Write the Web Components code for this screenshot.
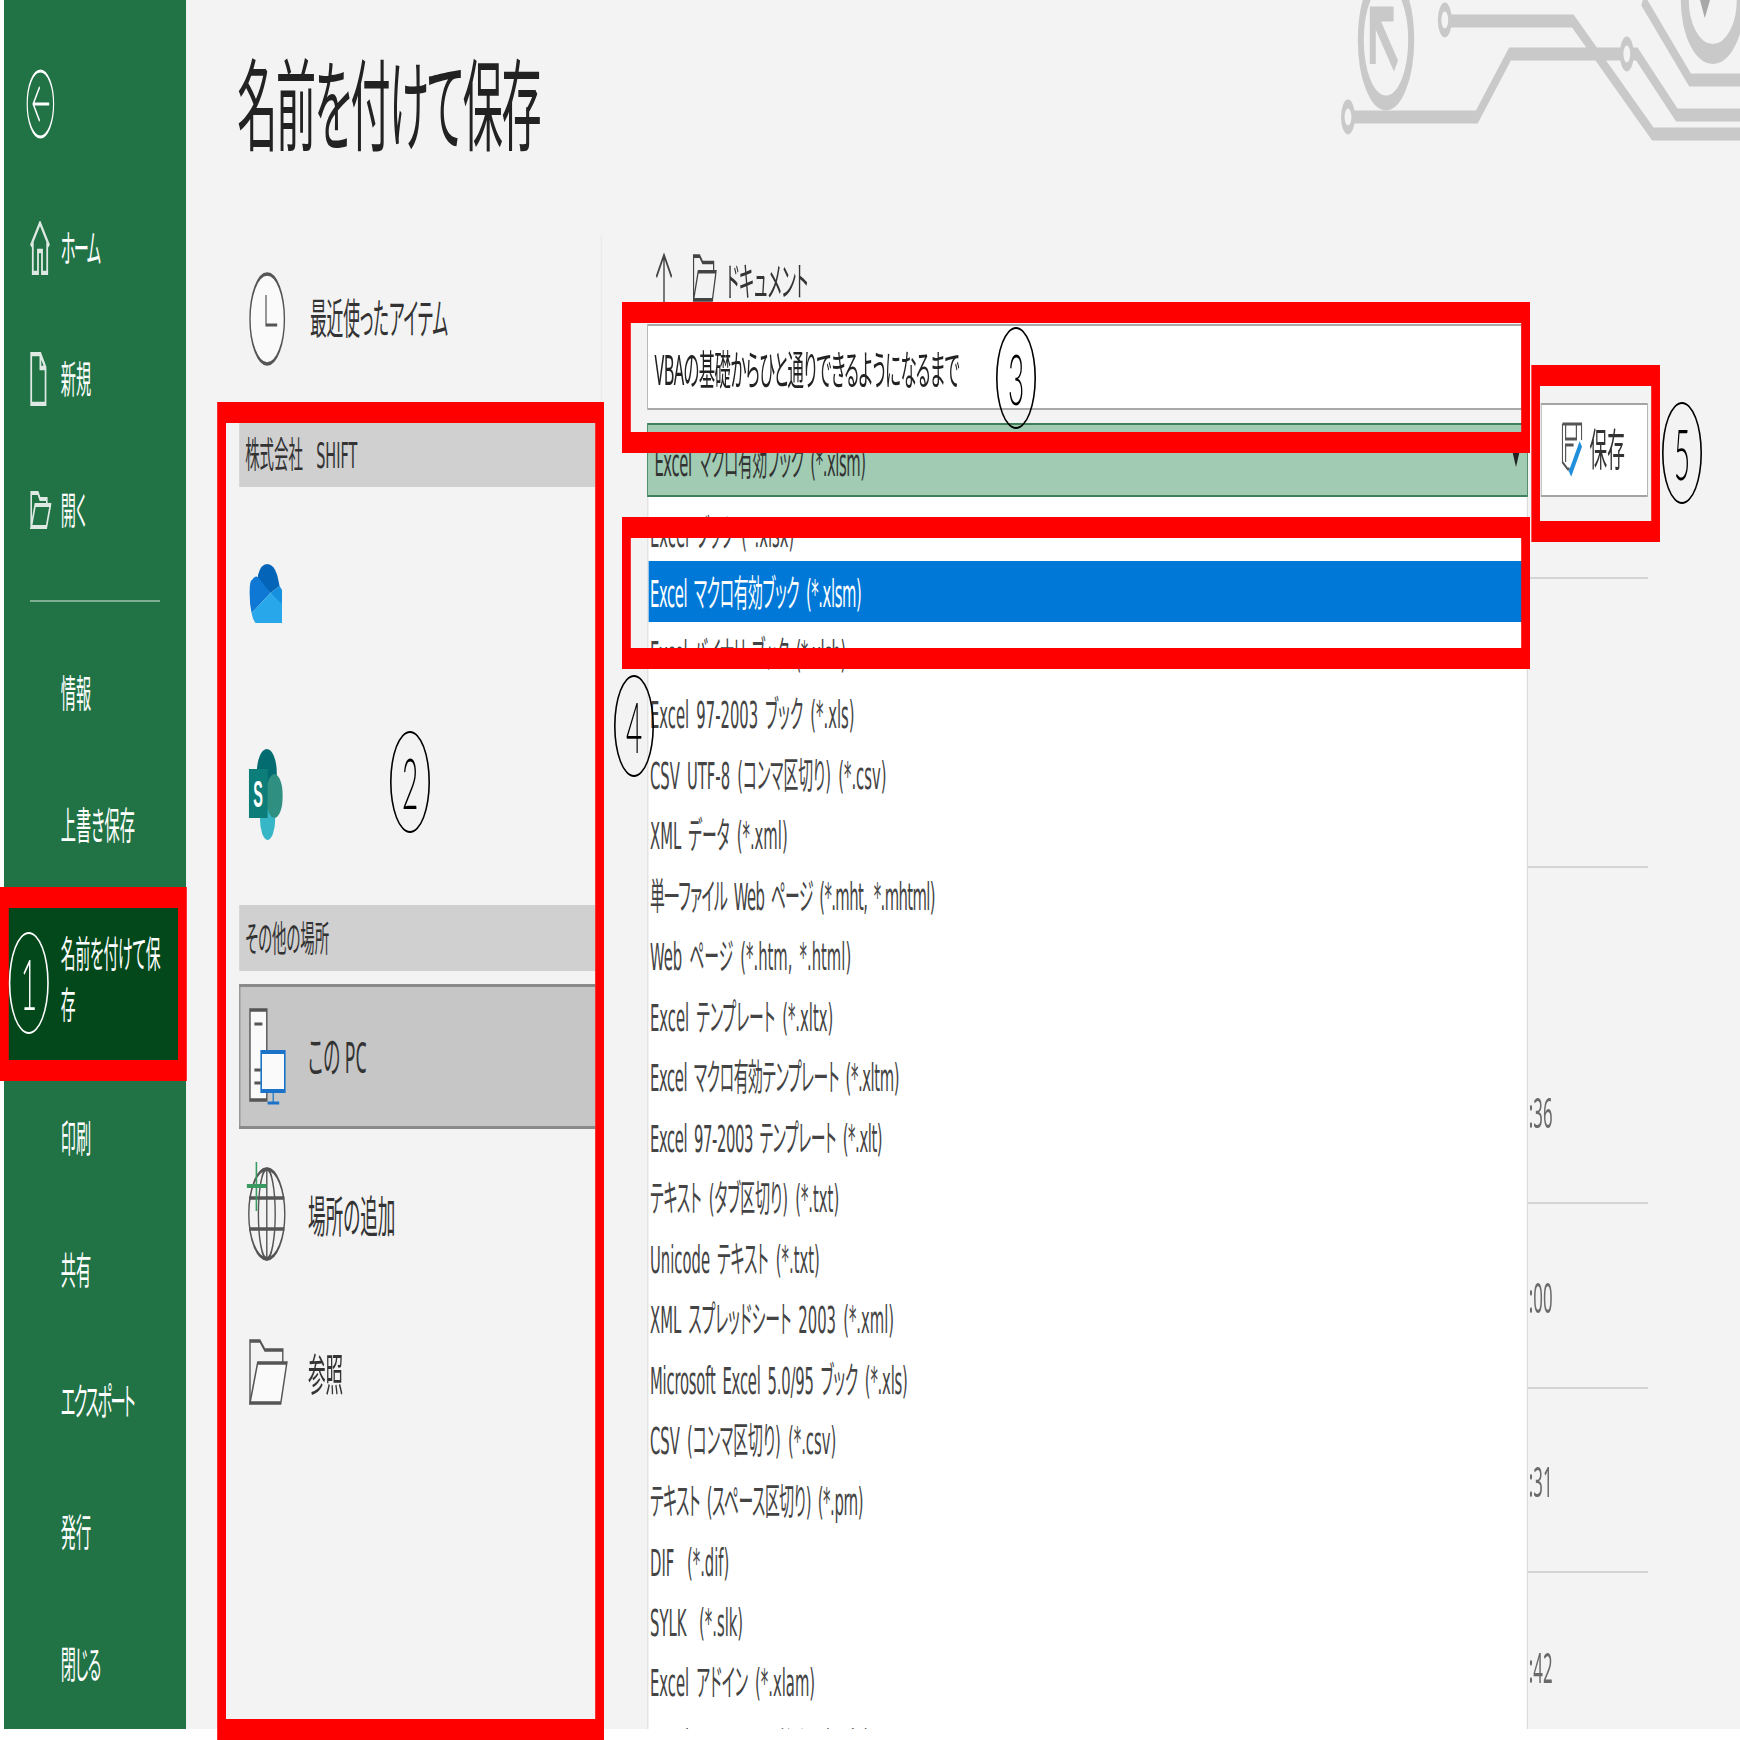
<!DOCTYPE html>
<html lang="ja">
<head>
<meta charset="UTF-8">
<title>名前を付けて保存</title>
<style>
html, body { margin: 0; background: #fff; overflow: hidden; }
</style>
</head>
<body>
<save-as-screen>
  <side-nav slot="nav">
    <nav-back></nav-back>
    <nav-item style="letter-spacing:-4px"><svg slot="icon" width="50" height="54" viewBox="0 0 50 54" fill="none" stroke="#dfe9e3" stroke-width="4.5"><path d="M2 25 25 2 48 25M7 21V52H20V30H30V52H43V21"/></svg>ホーム</nav-item>
    <nav-item><svg slot="icon" width="42" height="54" viewBox="0 0 42 54" fill="none" stroke="#dfe9e3" stroke-width="4.5"><path d="M3 2H26L39 16V52H3ZM26 2V16H39"/></svg>新規</nav-item>
    <nav-item><svg slot="icon" width="54" height="40" viewBox="0 0 54 40" fill="none" stroke="#dfe9e3" stroke-width="4"><path d="M3 37V3H20L25 9H42V15M3 37H41L51 15H13Z"/></svg>開く</nav-item>
    <nav-sep></nav-sep>
    <nav-item>情報</nav-item>
    <nav-item>上書き保存</nav-item>
    <nav-item selected>名前を付けて保存</nav-item>
    <nav-item>印刷</nav-item>
    <nav-item>共有</nav-item>
    <nav-item style="letter-spacing:-4px">エクスポート</nav-item>
    <nav-item>発行</nav-item>
    <nav-item style="letter-spacing:-2px">閉じる</nav-item>
  </side-nav>

  <save-title slot="title">名前を付けて保存</save-title>
  <circuit-art slot="art"></circuit-art>

  <place-list slot="places">
    <place-row h="120" mt="24" tx="5">
      <svg slot="icon" width="92" height="94" viewBox="0 0 92 94"><ellipse cx="46" cy="47" rx="43" ry="45" fill="#fafafa" stroke="#555" stroke-width="3.5"/><path d="M43 23V53H71" fill="none" stroke="#555" stroke-width="3"/></svg>
      <span style="font-size:42px;letter-spacing:-.5px">最近使ったアイテム</span>
    </place-row>
    <place-head mt="42">株式会社 SHIFT</place-head>
    <place-row h="200" mt="8">
      <svg slot="icon" width="85" height="60" viewBox="0 0 85 60" style="margin-top:-3px"><path d="M23 11Q30 0 46 0T71 11L77 22 54 29 23 16Z" fill="#0364b8"/><path d="M2 29Q2 16 8 16 16 11 23 13L54 29 7 49Q2 40 2 29Z" fill="#0f78d4"/><path d="M77 22 83 26V42L54 29Z" fill="#1490df"/><path d="M7 49 54 29 83 40V59H17Q10 56 7 49Z" fill="#28a8ea"/></svg>
    </place-row>
    <place-row h="200">
      <svg slot="icon" width="85" height="92" viewBox="0 0 85 92"><ellipse cx="45" cy="24" rx="25" ry="24" fill="#036c70"/><ellipse cx="47" cy="70" rx="19" ry="21" fill="#37b6c8"/><ellipse cx="64" cy="47" rx="21" ry="22" fill="#2f8f80"/><rect y="20" width="47" height="49" fill="#0d7d7a"/><text x="23" y="58" text-anchor="middle" fill="#fff" font-family="Liberation Sans" font-weight="700" font-size="36">S</text></svg>
    </place-row>
    <place-head mt="10">その他の場所</place-head>
    <place-row h="145" mt="13" selected>
      <svg slot="icon" width="93" height="97" viewBox="0 0 93 97"><rect x="3" y="2" width="42" height="90" fill="#fafafa" stroke="#555" stroke-width="3.5"/><path d="M14 16H34M14 62H30M14 75H30" stroke="#555" stroke-width="3"/><rect x="31" y="44" width="59" height="39" fill="#fafafa" stroke="#1a73c8" stroke-width="4"/><path d="M61 83V94M47 95H76" stroke="#1a73c8" stroke-width="3"/></svg>
      この PC
    </place-row>
    <place-row h="158" mt="9">
      <svg slot="icon" width="100" height="100" viewBox="0 0 100 100" fill="none" style="margin:-13px 0 0 -6px"><g stroke="#555" stroke-width="3.5"><circle cx="51" cy="53" r="45"/><ellipse cx="51" cy="53" rx="21" ry="45"/><path d="M7 37H95M7 68H95M51 8V98"/></g><path d="M25 1V50M1 25H50" stroke="#3a9a63" stroke-width="4"/></svg>
      場所の追加
    </place-row>
    <place-row h="158">
      <svg slot="icon" width="98" height="68" viewBox="0 0 98 68" fill="#fafafa" stroke="#555" stroke-width="3.5" style="margin-top:-6px"><path d="M3 65V3H28L40 12H85V25" fill="none"/><path d="M3 65H80L95 25H22Z"/></svg>
      参照
    </place-row>
  </place-list>

  <save-form slot="form">
    <path-bar>ドキュメント</path-bar>
    <name-input>VBAの基礎からひと通りできるようになるまで</name-input>
    <type-row>
      <type-combo>Excel マクロ有効ブック (*.xlsm)
        <type-menu slot="menu">
          <type-item>Excel ブック (*.xlsx)</type-item>
          <type-item selected style="letter-spacing:-1px">Excel マクロ有効ブック (*.xlsm)</type-item>
          <type-item style="letter-spacing:-1px">Excel バイナリ ブック (*.xlsb)</type-item>
          <type-item>Excel 97-2003 ブック (*.xls)</type-item>
          <type-item>CSV UTF-8 (コンマ区切り) (*.csv)</type-item>
          <type-item>XML データ (*.xml)</type-item>
          <type-item style="letter-spacing:-1.5px">単一ファイル Web ページ (*.mht, *.mhtml)</type-item>
          <type-item>Web ページ (*.htm, *.html)</type-item>
          <type-item>Excel テンプレート (*.xltx)</type-item>
          <type-item style="letter-spacing:-1px">Excel マクロ有効テンプレート (*.xltm)</type-item>
          <type-item style="letter-spacing:-1px">Excel 97-2003 テンプレート (*.xlt)</type-item>
          <type-item>テキスト (タブ区切り) (*.txt)</type-item>
          <type-item>Unicode テキスト (*.txt)</type-item>
          <type-item>XML スプレッドシート 2003 (*.xml)</type-item>
          <type-item style="letter-spacing:-.5px">Microsoft Excel 5.0/95 ブック (*.xls)</type-item>
          <type-item>CSV (コンマ区切り) (*.csv)</type-item>
          <type-item style="letter-spacing:-1px">テキスト (スペース区切り) (*.prn)</type-item>
          <type-item style="height:52.5px;padding-top:8px;word-spacing:20px">DIF (*.dif)</type-item>
          <type-item style="height:52.5px;padding-top:8px;word-spacing:20px">SYLK (*.slk)</type-item>
          <type-item>Excel アドイン (*.xlam)</type-item>
          <type-item>Excel 97-2003 アドイン (*.xla)</type-item>
        </type-menu>
      </type-combo>
      <save-button>保存</save-button>
    </type-row>
    <file-rows>
      <file-row h="82"></file-row>
      <file-row h="289"></file-row>
      <file-row h="336">:36</file-row>
      <file-row h="185">:00</file-row>
      <file-row h="184">:31</file-row>
      <file-row h="184">:42</file-row>
    </file-rows>
  </save-form>

  <red-frame slot="over" style="left:0;top:887px;width:467px;height:194px"></red-frame>
  <red-frame slot="over" style="left:543px;top:402px;width:967px;height:1338px"></red-frame>
  <red-frame slot="over" style="left:1555px;top:302px;width:2270px;height:151px"></red-frame>
  <red-frame slot="over" style="left:1555px;top:517px;width:2270px;height:152px"></red-frame>
  <red-frame slot="over" style="left:3828px;top:365px;width:322px;height:177px"></red-frame>

  <step-badge slot="over" light style="left:22px;top:932px">1</step-badge>
  <step-badge slot="over" style="left:975px;top:731px">2</step-badge>
  <step-badge slot="over" style="left:2490px;top:327px">3</step-badge>
  <step-badge slot="over" style="left:1535px;top:675px">4</step-badge>
  <step-badge slot="over" style="left:4155px;top:402px">5</step-badge>
</save-as-screen>

<script>
function el(name, html) {
  customElements.define(name, class extends HTMLElement {
    constructor() {
      super();
      this.attachShadow({ mode: 'open' }).innerHTML = html;
    }
  });
}

// the reference is squashed sideways, so the whole page is built wide and scaled to 0.4
el('save-as-screen', `<style>
  :host { display: block; width: 1740px; height: 1740px; overflow: hidden;
    font-family: "Noto Sans", "Noto Sans CJK JP", sans-serif; font-feature-settings: "palt"; }
  .stage { position: relative; width: 4350px; height: 1740px; transform: scaleX(.4); transform-origin: 0 0; }
  .shell { display: flex; height: 1729px; padding-left: 10px; filter: blur(.5px); }
  .main { flex: 1; background: #f3f3f3; display: flex; flex-direction: column; min-width: 0; }
  .top { display: flex; height: 235px; justify-content: space-between; flex: none; }
  .body { display: flex; flex: 1; min-height: 0; }
</style>
<div class="stage">
  <div class="shell">
    <slot name="nav"></slot>
    <div class="main">
      <div class="top"><slot name="title"></slot><slot name="art"></slot></div>
      <div class="body"><slot name="places"></slot><slot name="form"></slot></div>
    </div>
  </div>
  <slot name="over"></slot>
</div>`);

el('side-nav', `<style>
  :host { display: block; width: 455px; flex: none; background: #217346; color: #fff; font-size: 38px; }
</style><slot></slot>`);

el('nav-back', `<style>
  :host { display: block; height: 182px; padding: 68px 0 0 55px; box-sizing: border-box; }
  svg { display: block; }
</style><svg width="72" height="72" viewBox="0 0 72 72" fill="none" stroke="#fff"><circle cx="36" cy="36" r="33" stroke-width="3"/><path d="M18 36H58M34 19 18 36 34 53" stroke-width="3"/></svg>`);

el('nav-sep', `<style>
  :host { display: block; height: 51.5px; padding-top: 24px; box-sizing: border-box; }
  div { height: 2px; background: #7fae92; width: 325px; margin-left: 65px; }
</style><div></div>`);

class NavItem extends HTMLElement {
  constructor() {
    super();
    this.attachShadow({ mode: 'open' }).innerHTML = `<style>
      :host { display: flex; align-items: center; height: 131.4px; white-space: nowrap; }
      :host([selected]) { height: 182px; background: #02481b; white-space: normal; line-height: 51px; font-size: 37px; letter-spacing: -.5px; }
      .ic { width: 142px; flex: none; display: flex; padding-left: 65px; box-sizing: border-box; }
      .tx { width: 262px; padding-bottom: 5px; }
    </style><div class="ic"><slot name="icon"></slot></div><div class="tx"><slot></slot></div>`;
  }
}
customElements.define('nav-item', NavItem);

el('save-title', `<style>
  :host { display: block; margin: 39px 0 0 128px; font-size: 100px; letter-spacing: -3px; line-height: 130px; color: #222; white-space: nowrap; }
</style><slot></slot>`);

el('circuit-art', `<style>
  :host { display: block; width: 1000px; height: 145px; }
  svg { display: block; }
</style><svg width="1000" height="145" viewBox="0 0 1000 145" fill="none" stroke="#c9c9c9" stroke-width="13">
  <circle cx="115" cy="40" r="63" stroke-width="15"/>
  <path d="M82 64V14H134M90 20 140 66" stroke-width="15"/>
  <path d="M275 21H582L782 134H1000M33 117H342L425 54H706M730 54H742L842 115H1000M757 0 875 80H1000"/>
  <circle cx="262" cy="20" r="13" fill="#f3f3f3" stroke-width="9"/>
  <circle cx="20" cy="117" r="13" fill="#f3f3f3" stroke-width="9"/>
  <circle cx="717" cy="54" r="13" fill="#f3f3f3" stroke-width="9"/>
  <ellipse cx="932" cy="0" rx="70" ry="54" stroke-width="20"/>
  <path d="M900 0H925L912 18Z" fill="#a8a8a8" stroke="none"/>
</svg>`);

el('place-list', `<style>
  :host { display: block; width: 890px; margin-left: 133px; flex: none; color: #333; font-size: 44px; }
</style><slot></slot>`);

class PlaceRow extends HTMLElement {
  constructor() {
    super();
    this.attachShadow({ mode: 'open' }).innerHTML = `<style>
      :host { display: flex; align-items: center; white-space: nowrap; box-sizing: border-box; padding-left: 24px; }
      :host([selected]) { background: #c6c6c6; border: solid #8a8a8a; border-width: 3px 0 3px 3px; padding-left: 21px; }
      .ic { width: 148px; flex: none; display: flex; }
      .tx { padding-bottom: 6px; }
    </style><div class="ic"><slot name="icon"></slot></div><div class="tx"><slot></slot></div>`;
  }
  connectedCallback() {
    this.style.height = this.getAttribute('h') + 'px';
    if (this.hasAttribute('mt')) this.style.marginTop = this.getAttribute('mt') + 'px';
    if (this.hasAttribute('tx')) this.shadowRoot.querySelector('.tx').style.marginLeft = this.getAttribute('tx') + 'px';
  }
}
customElements.define('place-row', PlaceRow);

class PlaceHead extends HTMLElement {
  constructor() {
    super();
    this.attachShadow({ mode: 'open' }).innerHTML = `<style>
      :host { display: flex; align-items: center; height: 66px; background: #d0d0d0; padding: 0 0 5px 15px; box-sizing: border-box; font-family: "DejaVu Sans", "Noto Sans CJK JP", sans-serif; font-size: 36px; word-spacing: 22px; white-space: pre; }
    </style><span><slot></slot></span>`;
  }
  connectedCallback() { this.style.marginTop = this.getAttribute('mt') + 'px'; }
}
customElements.define('place-head', PlaceHead);

el('save-form', `<style>
  :host { display: block; flex: 1; min-width: 0; margin-left: 14px; padding-left: 114px; border-left: 2px solid #e4e4e4; color: #333; font-size: 42px; }
</style><slot></slot>`);

el('path-bar', `<style>
  :host { display: flex; align-items: center; height: 89px; padding: 7px 0 0 20px; box-sizing: border-box; white-space: nowrap; font-size: 40px; color: #333; }
  .up { margin-right: 50px; } .fd { margin: -10px 24px 0 0; }
  span { padding-bottom: 8px; }
</style>
<svg class="up" width="44" height="60" viewBox="0 0 44 60" fill="none" stroke="#444" stroke-width="3.5"><path d="M22 2V60M3 24 22 2 41 24"/></svg>
<svg class="fd" width="60" height="48" viewBox="0 0 98 68" preserveAspectRatio="none" fill="#f3f3f3" stroke="#444" stroke-width="5"><path d="M3 65V3H28L40 12H85V25" fill="none"/><path d="M3 65H80L95 25H22Z"/></svg>
<span><slot></slot></span>`);

el('name-input', `<style>
  :host { display: flex; align-items: center; width: 2187px; height: 86px; background: #fff; box-sizing: border-box; border: 2px solid #a8a8a8; padding-left: 16px; white-space: nowrap; color: #222; font-size: 41px; letter-spacing: -1.5px; }
</style><span><slot></slot></span>`);

el('type-row', `<style>
  :host { display: flex; align-items: flex-end; gap: 32px; margin-top: -7px; }
</style><slot></slot>`);

el('type-combo', `<style>
  :host { display: flex; align-items: center; position: relative; width: 2202px; height: 74px; flex: none; box-sizing: border-box; background: #a1ccb3; border: 2px solid #3f7f5a; padding-left: 16px; white-space: nowrap; font-family: "DejaVu Sans", "Noto Sans CJK JP", sans-serif; font-size: 37px; word-spacing: 6px; letter-spacing: -1px; color: #333; }
  .arrow { position: absolute; right: 14px; top: 18px; width: 0; height: 0; border: solid transparent; border-width: 24px 14px 0; border-top-color: #222; }
  ::slotted(type-menu) { position: absolute; left: -2px; top: 72px; }
</style><span><slot></slot></span><div class="arrow"></div><slot name="menu"></slot>`);

el('type-menu', `<style>
  :host { display: block; width: 2202px; height: 1232px; box-sizing: border-box; overflow: hidden; background: #fff; padding-top: 3.5px; border: solid #dcdcdc; border-width: 0 3px; letter-spacing: 0; }
</style><slot></slot>`);

el('type-item', `<style>
  :host { display: flex; align-items: center; height: 60.5px; padding-left: 4px; color: #444; white-space: nowrap; font-family: "DejaVu Sans", "Noto Sans CJK JP", sans-serif; font-size: 37px; word-spacing: 6px; }
  :host([selected]) { background: #0078d7; color: #fff; }
</style><span><slot></slot></span>`);

el('save-button', `<style>
  :host { display: flex; align-items: center; gap: 18px; width: 268px; height: 94px; flex: none; box-sizing: border-box; background: #fff; border: 2px solid #a4a4a4; padding-left: 50px; font-size: 44px; color: #333; }
  svg { display: block; }
  span { padding-bottom: 6px; }
</style><svg width="52" height="56" viewBox="0 0 52 56" fill="none" stroke="#555" stroke-width="3"><path d="M2 2H50V18M2 2V40L15 47H20M10 2V17H37V2M10 40V23H30"/><path d="M48 22 21 52" stroke="#1f8fdc" stroke-width="8"/></svg><span><slot></slot></span>`);

el('file-rows', `<style>
  :host { display: block; margin-left: 2202px; width: 300px; }
</style><slot></slot>`);

class FileRow extends HTMLElement {
  constructor() {
    super();
    this.attachShadow({ mode: 'open' }).innerHTML = `<style>
      :host { display: flex; align-items: flex-end; box-sizing: border-box; padding: 0 0 65px 2px; border-bottom: 2px solid #d4d4d4; font-size: 42px; line-height: 50px; color: #6a6a6a; }
      :host(:last-child) { border-bottom: 0; }
    </style><slot></slot>`;
  }
  connectedCallback() { this.style.height = this.getAttribute('h') + 'px'; }
}
customElements.define('file-row', FileRow);

el('red-frame', `<style>
  :host { display: block; position: absolute; box-sizing: border-box; border: solid #f00; border-width: 21px 22px; pointer-events: none; }
</style>`);

el('step-badge', `<style>
  :host { position: absolute; display: flex; align-items: center; justify-content: center; width: 100px; height: 102px; box-sizing: border-box; border: solid #000; border-width: 2px 4px; border-radius: 50%; font-family: Lato, sans-serif; font-weight: 300; font-size: 70px; color: #000; }
  :host([light]) { border-color: #fff; color: #fff; }
</style><slot></slot>`);
</script>
</body>
</html>
